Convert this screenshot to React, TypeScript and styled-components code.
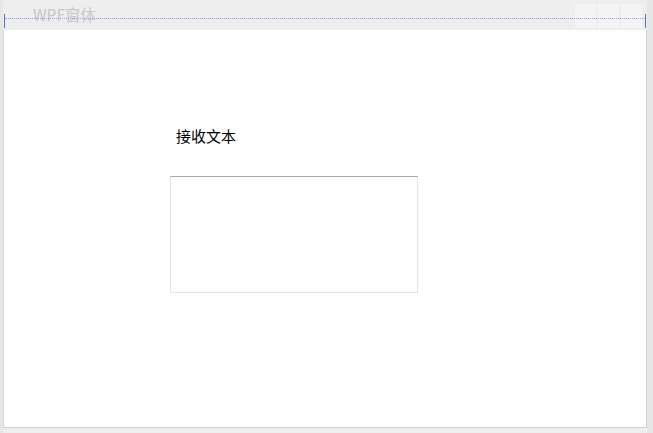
import styled, { createGlobalStyle } from 'styled-components'

const Global = createGlobalStyle`
  html, body { margin: 0; padding: 0; background: #ffffff; }
  body { font-family: "Microsoft YaHei", "Noto Sans CJK SC", "Liberation Sans", sans-serif; }
`

const Frame = styled.div`
  position: relative;
  box-sizing: border-box;
  width: 653px;
  height: 433px;
  background: #eeeeee;
  border-left: 3px solid #e6e6e6;
  border-right: 6px solid #e6e6e6;
  display: flex;
  flex-direction: column;
`

const TitleBar = styled.div`
  height: 30px;
  display: flex;
  align-items: center;
  padding-left: 30px;
  padding-right: 5px;
`

const Title = styled.span`
  font-size: 15.5px;
  color: #c8c8c8;
  margin-top: -2px;
`

const Caption = styled.div`
  margin-left: auto;
  display: flex;
  gap: 2px;
  align-self: flex-start;
  margin-top: 4px;
`

const CapButton = styled.div`
  width: 21px;
  height: 24px;
  background: #f4f4f4;
`

const Client = styled.div`
  flex: 1;
  background: #ffffff;
  border-left: 1px solid #d4d4d4;
  border-right: 1px solid #cfcfcf;
  border-bottom: 1px solid #cfcfcf;
  margin-bottom: 5px;
  padding: 96px 0 0 166px;
  display: flex;
  flex-direction: column;
`

const Label = styled.div`
  font-size: 15px;
  color: #000000;
  padding-left: 6px;
  line-height: 20px;
`

const TextBox = styled.textarea`
  box-sizing: border-box;
  margin-top: 30px;
  width: 248px;
  height: 117px;
  border: 1px solid #e3e3e3;
  border-top-color: #a9a9a9;
  resize: none;
  outline: none;
  background: #ffffff;
`

const Guide = styled.div`
  position: absolute;
  left: 2px;
  right: 2px;
  top: 18px;
  height: 0;
  border-top: 1px dotted #8ea6e8;
`

const Tick = styled.div<{ $side: 'left' | 'right' }>`
  position: absolute;
  top: 14px;
  ${p => (p.$side === 'left' ? 'left: 1px;' : 'right: 1px;')}
  width: 1px;
  height: 14px;
  background: #5a70cc;
`

export default function App() {
  return (
    <>
      <Global />
      <Frame>
        <TitleBar>
          <Title>WPF窗体</Title>
          <Caption>
            <CapButton />
            <CapButton />
            <CapButton />
          </Caption>
        </TitleBar>
        <Client>
          <Label>接收文本</Label>
          <TextBox />
        </Client>
        <Guide />
        <Tick $side="left" />
        <Tick $side="right" />
      </Frame>
    </>
  )
}
